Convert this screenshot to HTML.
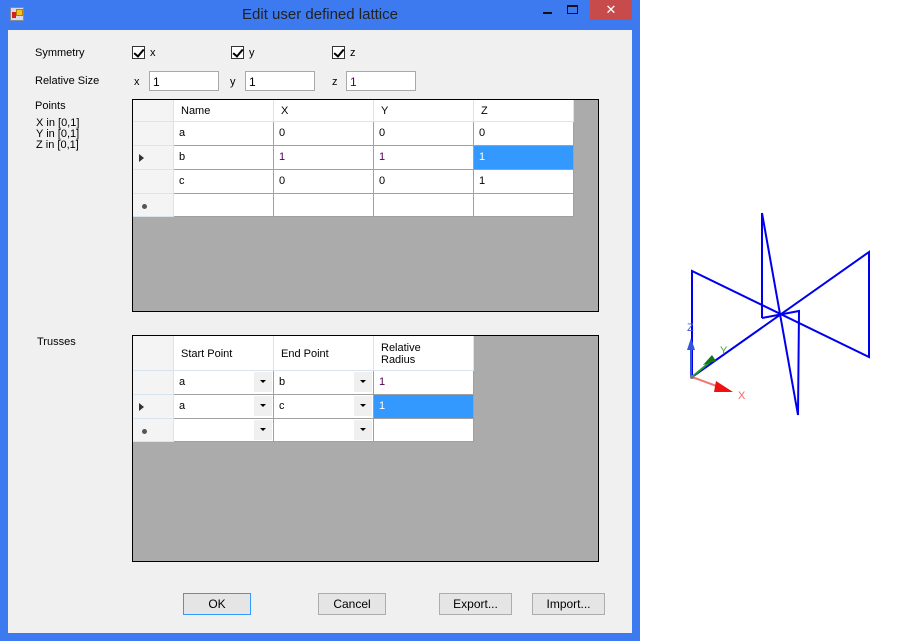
<!DOCTYPE html><html><head><style>
*{margin:0;padding:0;box-sizing:border-box}
body{width:915px;height:641px;background:#fff;position:relative;font-family:"Liberation Sans",sans-serif;font-size:11px;color:#000;overflow:hidden}
.a{position:absolute}
.win{left:0;top:0;width:640px;height:641px;background:#3d7af0}
.client{left:8px;top:30px;width:624px;height:603px;background:#f0f0f0}
.t{position:absolute;white-space:nowrap}
.cb{position:absolute;width:13px;height:13px;border:1px solid #333;background:#fff}
.cb:after{content:"";position:absolute;left:3px;top:0px;width:4px;height:8px;border-right:2px solid #000;border-bottom:2px solid #000;transform:rotate(40deg)}
.tb{position:absolute;height:20px;border:1px solid #a9a9a9;background:#fff;padding:3px 3px;font-size:12px}
.grid{position:absolute;border:1px solid #000;background:#ababab}
.c{position:absolute;background:#fff;border-right:1px solid #a0a0a0;border-bottom:1px solid #a0a0a0;padding:5px 5px}
.h{background:#fff;border-right:1px solid #d8e4f0;border-bottom:1px solid #d8e4f0;padding:5px 7px}
.rh{background:#f4f4f4;border-right:1px solid #d8e4f0;border-bottom:1px solid #d8e4f0}
.sel{background:#3399ff;color:#fff}
.dd{position:absolute;right:1px;top:1px;width:18px;height:20px;background:#f0f0f0}
.dd:after{content:"";position:absolute;left:6px;top:8px;border-left:3px solid transparent;border-right:3px solid transparent;border-top:3px solid #000}
.btn{position:absolute;height:22px;border:1px solid #adadad;background:#e5e5e5;text-align:center;line-height:20px;font-size:12px}
.arr{position:absolute;border-top:4px solid transparent;border-bottom:4px solid transparent;border-left:5px solid #333}
.star{position:absolute;width:5px;height:5px;border-radius:50%;background:#555}
</style></head><body>
<div class="a win"></div>
<div class="a" style="left:10px;top:7px;width:14px;height:14px;background:#d8d8e8;border:1px solid #889"><div class="a" style="left:1px;top:4px;width:4px;height:6px;background:#d02020"></div><div class="a" style="left:5px;top:1px;width:7px;height:7px;background:#f0c020;border:1px solid #b08000"></div></div>
<div class="t" style="left:0;width:640px;text-align:center;top:6px;font-size:15px;color:#222">Edit user defined lattice</div>
<div class="a" style="left:543px;top:12px;width:9px;height:2px;background:#111"></div>
<div class="a" style="left:567px;top:5px;width:11px;height:9px;border:1px solid #111;border-top:2px solid #111"></div>
<div class="a" style="left:590px;top:0;width:42px;height:20px;background:#c84b4b;color:#fff;text-align:center;font-size:13px;line-height:20px">✕</div>
<div class="a client"></div>

<div class="t" style="left:35px;top:47px">Symmetry</div>
<div class="cb" style="left:132px;top:46px"></div><div class="t" style="left:150px;top:47px">x</div>
<div class="cb" style="left:231px;top:46px"></div><div class="t" style="left:249px;top:47px">y</div>
<div class="cb" style="left:332px;top:46px"></div><div class="t" style="left:350px;top:47px">z</div>

<div class="t" style="left:35px;top:75px">Relative Size</div>
<div class="t" style="left:134px;top:76px">x</div><div class="tb" style="left:149px;top:71px;width:70px">1</div>
<div class="t" style="left:230px;top:76px">y</div><div class="tb" style="left:245px;top:71px;width:70px">1</div>
<div class="t" style="left:332px;top:76px">z</div><div class="tb" style="left:346px;top:71px;width:70px;color:#500050">1</div>

<div class="t" style="left:35px;top:100px">Points</div>
<div class="t" style="left:36px;top:118px;line-height:11px">X in [0,1]<br>Y in [0,1]<br>Z in [0,1]</div>
<div class="t" style="left:37px;top:336px">Trusses</div>

<div class="grid" style="left:132px;top:99px;width:467px;height:213px">
<div class="c rh" style="left:0;top:0;width:41px;height:22px"></div>
<div class="c h" style="left:41px;top:0;width:100px;height:22px">Name</div>
<div class="c h" style="left:141px;top:0;width:100px;height:22px">X</div>
<div class="c h" style="left:241px;top:0;width:100px;height:22px">Y</div>
<div class="c h" style="left:341px;top:0;width:100px;height:22px">Z</div>
<div class="c rh" style="left:0;top:22px;width:41px;height:24px"></div>
<div class="c" style="left:41px;top:22px;width:100px;height:24px">a</div>
<div class="c" style="left:141px;top:22px;width:100px;height:24px">0</div>
<div class="c" style="left:241px;top:22px;width:100px;height:24px">0</div>
<div class="c" style="left:341px;top:22px;width:100px;height:24px">0</div>
<div class="c rh" style="left:0;top:46px;width:41px;height:24px"><div class="arr" style="left:6px;top:8px"></div></div>
<div class="c" style="left:41px;top:46px;width:100px;height:24px">b</div>
<div class="c" style="left:141px;top:46px;width:100px;height:24px;color:#500050">1</div>
<div class="c" style="left:241px;top:46px;width:100px;height:24px;color:#500050">1</div>
<div class="c sel" style="left:341px;top:46px;width:100px;height:24px">1</div>
<div class="c rh" style="left:0;top:70px;width:41px;height:24px"></div>
<div class="c" style="left:41px;top:70px;width:100px;height:24px">c</div>
<div class="c" style="left:141px;top:70px;width:100px;height:24px">0</div>
<div class="c" style="left:241px;top:70px;width:100px;height:24px">0</div>
<div class="c" style="left:341px;top:70px;width:100px;height:24px">1</div>
<div class="c rh" style="left:0;top:94px;width:41px;height:23px"><div class="star" style="left:9px;top:10px"></div></div>
<div class="c" style="left:41px;top:94px;width:100px;height:23px"></div>
<div class="c" style="left:141px;top:94px;width:100px;height:23px"></div>
<div class="c" style="left:241px;top:94px;width:100px;height:23px"></div>
<div class="c" style="left:341px;top:94px;width:100px;height:23px"></div>
</div>

<div class="grid" style="left:132px;top:335px;width:467px;height:227px">
<div class="c rh" style="left:0;top:0;width:41px;height:35px"></div>
<div class="c h" style="left:41px;top:0;width:100px;height:35px;padding-top:12px">Start Point</div>
<div class="c h" style="left:141px;top:0;width:100px;height:35px;padding-top:12px">End Point</div>
<div class="c h" style="left:241px;top:0;width:100px;height:35px;padding-top:6px;line-height:12px">Relative<br>Radius</div>
<div class="c rh" style="left:0;top:35px;width:41px;height:24px"></div>
<div class="c" style="left:41px;top:35px;width:100px;height:24px">a<div class="dd"></div></div>
<div class="c" style="left:141px;top:35px;width:100px;height:24px">b<div class="dd"></div></div>
<div class="c" style="left:241px;top:35px;width:100px;height:24px;color:#500050">1</div>
<div class="c rh" style="left:0;top:59px;width:41px;height:24px"><div class="arr" style="left:6px;top:8px"></div></div>
<div class="c" style="left:41px;top:59px;width:100px;height:24px">a<div class="dd"></div></div>
<div class="c" style="left:141px;top:59px;width:100px;height:24px">c<div class="dd"></div></div>
<div class="c sel" style="left:241px;top:59px;width:100px;height:24px">1</div>
<div class="c rh" style="left:0;top:83px;width:41px;height:23px"><div class="star" style="left:9px;top:10px"></div></div>
<div class="c" style="left:41px;top:83px;width:100px;height:23px"><div class="dd"></div></div>
<div class="c" style="left:141px;top:83px;width:100px;height:23px"><div class="dd"></div></div>
<div class="c" style="left:241px;top:83px;width:100px;height:23px"></div>
</div>

<div class="btn" style="left:183px;top:593px;width:68px;border-color:#3399ff">OK</div>
<div class="btn" style="left:318px;top:593px;width:68px">Cancel</div>
<div class="btn" style="left:439px;top:593px;width:73px">Export...</div>
<div class="btn" style="left:532px;top:593px;width:73px">Import...</div>

<svg class="a" style="left:0;top:0" width="915" height="641">
<g fill="none" stroke="#0000ee" stroke-width="2">
<polyline points="692,377 692,271 869,357 869,252 692,377"/>
<polyline points="762,318 762,213 798,415 799,311 762,318"/>
</g>
<line x1="691" y1="377" x2="691" y2="345" stroke="#3355dd" stroke-width="2"/>
<polygon points="687,350 695,350 691,338" fill="#3355dd"/>
<text x="687" y="331" font-size="11" fill="#4455ee" font-family="Liberation Sans">Z</text>
<line x1="692" y1="377" x2="710" y2="362" stroke="#229922" stroke-width="2"/>
<polygon points="703,365 712,355 716,361" fill="#117711"/>
<text x="720" y="354" font-size="11" fill="#33aa33" font-family="Liberation Sans">Y</text>
<line x1="692" y1="377" x2="722" y2="388" stroke="#ee7777" stroke-width="2"/>
<polygon points="716,381 733,392 714,392" fill="#ee1111"/>
<text x="738" y="399" font-size="11" fill="#ee6666" font-family="Liberation Sans">X</text>
<circle cx="692" cy="377" r="2" fill="#777"/>
</svg>
</body></html>
